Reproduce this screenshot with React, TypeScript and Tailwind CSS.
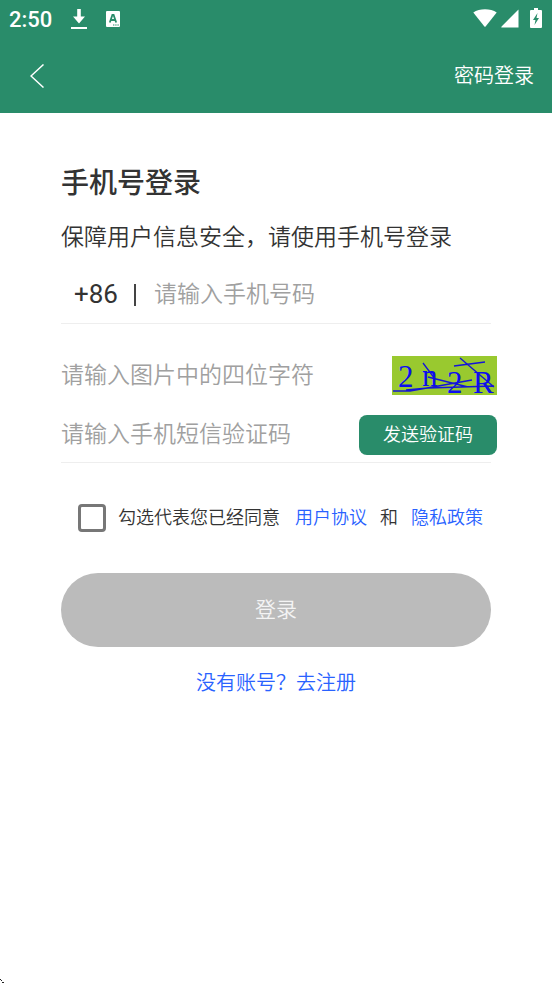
import { useState } from "react";

function StatusBar() {
  return (
    <div className="flex h-[38px] items-center justify-between pl-[9px] pr-[10px] text-white">
      <div className="flex items-center">
        <span className="w-[62px] pt-[2px] text-[22px] font-medium leading-6">2:50</span>
        <svg className="h-5 w-4" viewBox="0 0 16 20" fill="currentColor">
          <path d="M6.200 0h3.600v7.500H14L8 14.500 2 7.500h4.200zM0 18h16v2H0z" />
        </svg>
        <svg className="ml-[19px] h-4 w-[14px]" viewBox="0 0 14 16">
          <rect width="14" height="16" rx="1" fill="currentColor" />
          <path
            d="M3.8 11.5 6.4 4h1.200l2.600 7.500M5 9h4"
            fill="none"
            stroke="#298c6a"
            strokeWidth="1.8"
          />
          <path d="M7 13.5h1.4v1H7zM9.2 13.5h1.4v1H9.2zM11.4 13.5h1.4v1h-1.4z" fill="#298c6a" />
        </svg>
      </div>
      <div className="flex items-center pb-[2px]">
        <svg className="h-5 w-6" viewBox="0 0 24 20" fill="currentColor">
          <path d="M.3 4.500C6.500.2 17.500.2 23.700 4.500L12.600 18.500q-.6.700-1.200 0z" />
        </svg>
        <svg className="ml-1 h-5 w-[18px]" viewBox="0 0 18 20" fill="currentColor">
          <path d="M17.500 1.500v18H1Q-.2 19.500.6 18.500z" />
        </svg>
        <svg className="ml-[11px] h-5 w-3" viewBox="0 0 12 20">
          <path
            d="M4 0h4v2h3q1 0 1 1v16q0 1-1 1H1q-1 0-1-1V3q0-1 1-1h3z"
            fill="currentColor"
          />
          <path d="M7.500 5 3 12h2.500l-1 5L9 10H6.500z" fill="#298c6a" />
        </svg>
      </div>
    </div>
  );
}

function Header() {
  return (
    <header className="bg-[#298c6a]">
      <StatusBar />
      <nav className="flex h-[75px] items-center justify-between pl-[30px] pr-[18px] text-white">
        <button type="button" aria-label="返回">
          <svg
            className="h-6 w-[14px]"
            viewBox="0 0 14 24"
            fill="none"
            stroke="currentColor"
            strokeWidth="1.5"
          >
            <path d="M13.5.5 1 12l12.500 11.500" />
          </svg>
        </button>
        <a href="#password" className="text-xl">
          密码登录
        </a>
      </nav>
    </header>
  );
}

function Captcha() {
  return (
    <svg className="h-[39px] w-[105px] overflow-visible" viewBox="0 0 105 39">
      <rect width="105" height="39" fill="#99c92f" />
      <g fill="#0c0cf0" fontFamily="Liberation Serif, serif" fontWeight="400">
        <text x="6" y="31" fontSize="31">2</text>
        <text x="30" y="30" fontSize="31">n</text>
        <text x="55" y="37" fontSize="31">2</text>
        <text x="81" y="37" fontSize="31">R</text>
      </g>
      <path
        d="M1 35h17l62-11M14 34 36 32 102 30M31 7l12 16M36 21l40 10M62 10l31-4M68 2l34 29"
        stroke="#1414d8"
        strokeWidth="1.3"
        fill="none"
      />
    </svg>
  );
}

export default function App() {
  const [agreed, setAgreed] = useState(false);

  return (
    <div className="relative min-h-screen bg-white font-['Roboto','Noto_Sans_CJK_SC',sans-serif] font-[350] text-[#333333]">
      <Header />

      <main className="px-[61px] pt-[53px]">
        <h1 className="text-[28px] font-medium leading-9">手机号登录</h1>
        <p className="mt-[18px] whitespace-nowrap text-[23px] leading-9">
          保障用户信息安全，请使用手机号登录
        </p>

        <form onSubmit={(e) => e.preventDefault()}>
          <div className="mt-2 flex h-[60px] items-center border-b border-[#eeeeee] pt-[2px]">
            <label
              htmlFor="phone"
              className="flex shrink-0 items-center pl-[13px] text-[26px] font-normal"
            >
              +86
              <span className="ml-4 mr-[18px] h-[22px] w-[2px] bg-[#444444]" />
            </label>
            <input
              id="phone"
              type="tel"
              placeholder="请输入手机号码"
              className="w-full min-w-0 pt-[2px] text-[23px] outline-none placeholder:text-[#a0a0a0]"
            />
          </div>

          <div className="-mr-[6px] mt-8 flex h-[39px] items-center justify-between">
            <input
              type="text"
              aria-label="请输入图片中的四位字符"
              placeholder="请输入图片中的四位字符"
              className="min-w-0 flex-1 pt-[2px] text-[23px] outline-none placeholder:text-[#a0a0a0]"
            />
            <button type="button" aria-label="换一张">
              <Captcha />
            </button>
          </div>

          <div className="mt-5 border-b border-[#eeeeee] pb-[7px]">
            <div className="-mr-[6px] flex h-10 items-center">
              <input
                type="text"
                aria-label="请输入手机短信验证码"
                placeholder="请输入手机短信验证码"
                className="min-w-0 flex-1 text-[23px] outline-none placeholder:text-[#a0a0a0]"
              />
              <button
                type="button"
                className="h-10 w-[138px] rounded-lg bg-[#298c6a] text-lg text-white"
              >
                发送验证码
              </button>
            </div>
          </div>

          <div className="mt-[41px] flex items-center whitespace-nowrap pl-[17px] text-lg">
            <input
              id="agree"
              type="checkbox"
              checked={agreed}
              onChange={(e) => setAgreed(e.target.checked)}
              className="size-7 shrink-0 appearance-none rounded border-3 border-[#777777] checked:bg-[#298c6a]"
            />
            <label htmlFor="agree" className="ml-3">
              勾选代表您已经同意
            </label>
            <a href="#terms" className="ml-[15px] text-[#2962ff]">
              用户协议
            </a>
            <span className="mx-[13px]">和</span>
            <a href="#privacy" className="text-[#2962ff]">
              隐私政策
            </a>
          </div>

          <button
            type="submit"
            className="mt-[41px] h-[74px] w-full rounded-full bg-[#bbbbbb] pt-[2px] text-[21px] text-[#f4f4f4]"
          >
            登录
          </button>
        </form>

        <p className="mt-[22px] text-center text-xl">
          <a href="#register" className="text-[#2962ff]">
            没有账号？去注册
          </a>
        </p>
      </main>

      <svg className="absolute bottom-0 left-0 size-1" viewBox="0 0 4 4">
        <path d="M0 0h1v1H0zM1 1h1v1H1zM2 3h2v1H2z" fill="#222222" />
      </svg>
    </div>
  );
}
